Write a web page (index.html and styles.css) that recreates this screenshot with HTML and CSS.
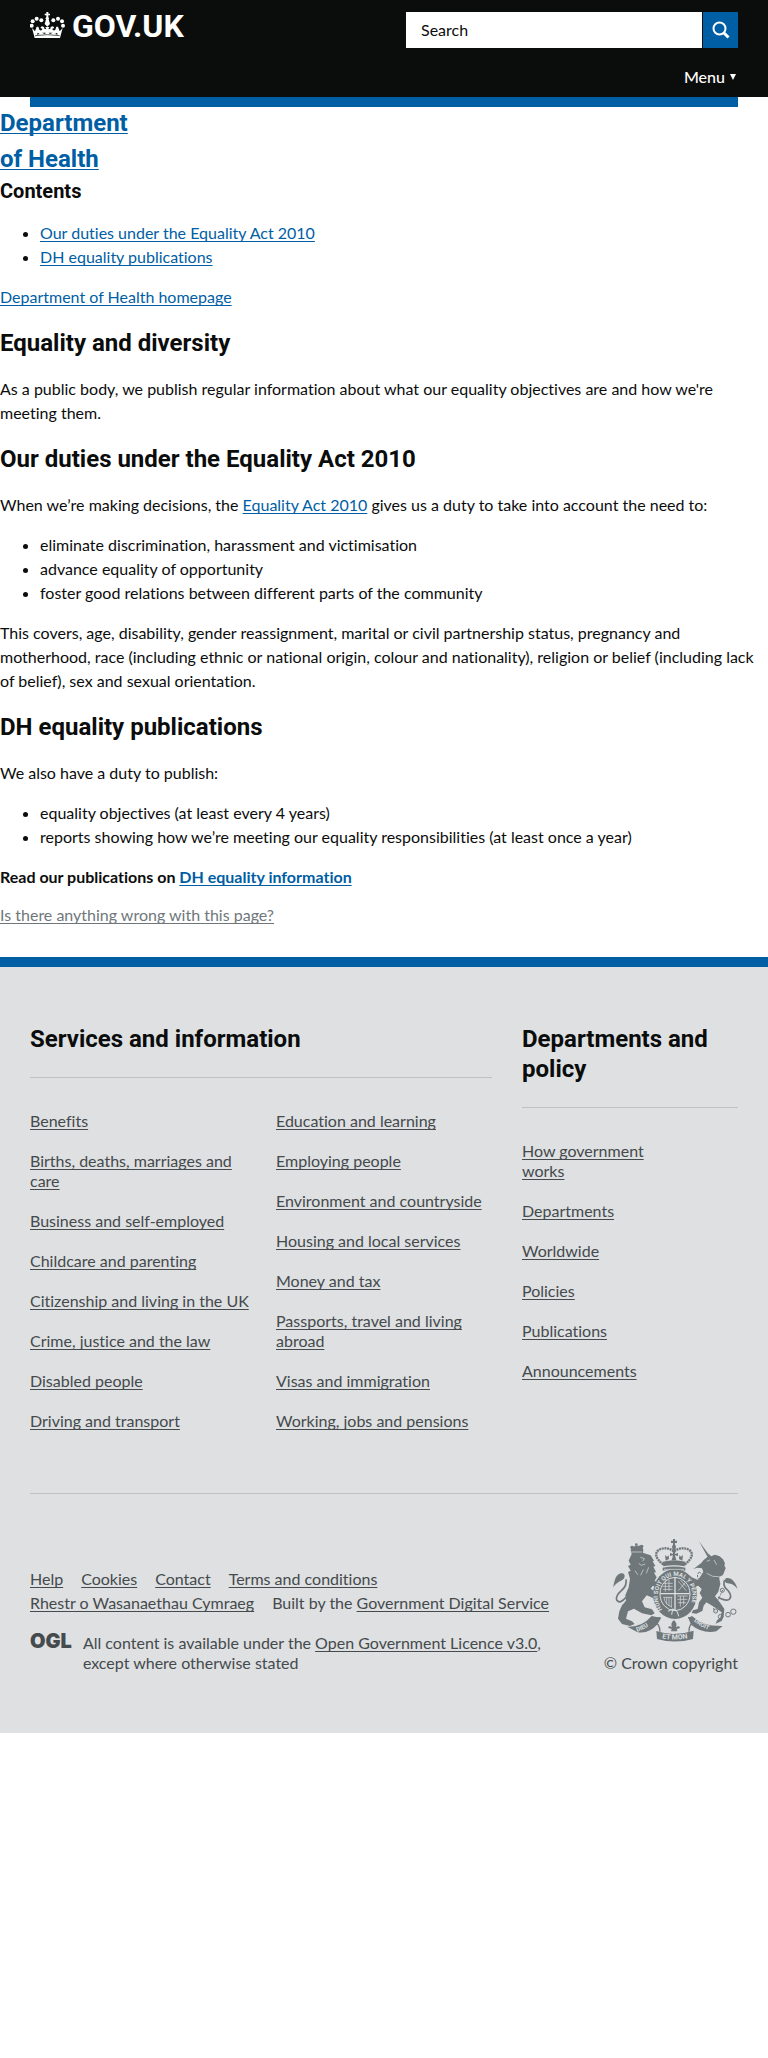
FILE: index.html
```html
<!DOCTYPE html>
<html lang="en">
<head>
<meta charset="utf-8">
<meta name="viewport" content="width=device-width, initial-scale=1">
<title>Equality and diversity - Department of Health - GOV.UK</title>
<link rel="stylesheet" href="styles.css">
</head>
<body>
<header class="site-header">
  <div class="header-inner">
    <a class="logo" href="#" aria-label="GOV.UK home">
      <svg class="logo-crown" viewBox="92 36 105 78" width="35" height="26" aria-hidden="true">
        <g fill="currentColor">
          <path d="M141 36h6v5h5v5h-5v6h-6v-6h-5v-5h5z"/>
          <circle cx="144" cy="55" r="5"/>
          <path d="M140 58h8l4 14-8 8-8-8z"/>
          <circle cx="112" cy="56" r="6"/><circle cx="100" cy="64" r="6"/><circle cx="97" cy="77" r="6"/>
          <circle cx="126" cy="61" r="6"/><circle cx="162" cy="61" r="6"/>
          <circle cx="176" cy="56" r="6"/><circle cx="188" cy="64" r="6"/><circle cx="191" cy="77" r="6"/>
          <path d="M98 84l9 10 5-14h5l3 9c4 4 8 2 9-3l-6-2 4-5c5 0 8 2 8 7l6 2-3-7h12l-3 7 6-2c0-5 3-7 8-7l4 5-6 2c1 5 5 7 9 3l3-9h5l5 14 9-10-8 30H106zM115 98l-2 6 8-2zM128 98l8 4 4-4zM160 98l-8 4-4-4zM173 98l2 6-8-2z" fill-rule="evenodd"/>
        </g>
        <path d="M107 107q37-6 74 0" fill="none" stroke="#0b0c0c" stroke-width="2"/>
      </svg>
      <span class="logo-text">GOV.UK</span>
    </a>
    <div class="header-tools">
      <form class="search" role="search">
        <input class="search-input" type="search" aria-label="Search GOV.UK" placeholder="Search">
        <button class="search-button" type="submit" aria-label="Search">
          <svg viewBox="0 0 18 18" width="18" height="18" aria-hidden="true">
            <circle cx="7.5" cy="7.5" r="6" fill="none" stroke="currentColor" stroke-width="2"/>
            <path d="M12 12l4.500 4.500" stroke="currentColor" stroke-width="3"/>
          </svg>
        </button>
      </form>
      <button class="menu-button" type="button">Menu
        <svg viewBox="0 0 6 6" width="6" height="6" aria-hidden="true"><path d="M0 0h6L3 6z" fill="currentColor"/></svg>
      </button>
    </div>
  </div>
</header>
<div class="header-bar"></div>

<main class="content">
  <div class="organisation"><a href="#">Department<br>of Health</a></div>
  <h2 class="contents-title">Contents</h2>
  <ul>
    <li><a href="#duties">Our duties under the Equality Act 2010</a></li>
    <li><a href="#publications">DH equality publications</a></li>
  </ul>
  <p><a href="#">Department of Health homepage</a></p>
  <h1>Equality and diversity</h1>
  <p>As a public body, we publish regular information about what our equality objectives are and how we're meeting them.</p>
  <h2 id="duties">Our duties under the Equality Act 2010</h2>
  <p>When we’re making decisions, the <a href="#">Equality Act 2010</a> gives us a duty to take into account the need to:</p>
  <ul>
    <li>eliminate discrimination, harassment and victimisation</li>
    <li>advance equality of opportunity</li>
    <li>foster good relations between different parts of the community</li>
  </ul>
  <p>This covers, age, disability, gender reassignment, marital or civil partnership status, pregnancy and motherhood, race (including ethnic or national origin, colour and nationality), religion or belief (including lack of belief), sex and sexual orientation.</p>
  <h2 id="publications">DH equality publications</h2>
  <p>We also have a duty to publish:</p>
  <ul>
    <li>equality objectives (at least every 4 years)</li>
    <li>reports showing how we’re meeting our equality responsibilities (at least once a year)</li>
  </ul>
  <p><strong>Read our publications on <a href="#">DH equality information</a></strong></p>
  <p class="feedback"><a href="#">Is there anything wrong with this page?</a></p>
</main>

<footer class="site-footer">
  <div class="footer-inner">
    <div class="footer-categories">
      <section class="services">
        <h2>Services and information</h2>
        <ul>
          <li><a href="#">Benefits</a></li>
          <li><a href="#">Births, deaths, marriages and care</a></li>
          <li><a href="#">Business and self-employed</a></li>
          <li><a href="#">Childcare and parenting</a></li>
          <li class="one-line"><a href="#">Citizenship and living in the UK</a></li>
          <li><a href="#">Crime, justice and the law</a></li>
          <li><a href="#">Disabled people</a></li>
          <li><a href="#">Driving and transport</a></li>
          <li><a href="#">Education and learning</a></li>
          <li><a href="#">Employing people</a></li>
          <li><a href="#">Environment and countryside</a></li>
          <li><a href="#">Housing and local services</a></li>
          <li><a href="#">Money and tax</a></li>
          <li><a href="#">Passports, travel and living abroad</a></li>
          <li><a href="#">Visas and immigration</a></li>
          <li><a href="#">Working, jobs and pensions</a></li>
        </ul>
      </section>
      <section class="departments">
        <h2>Departments and policy</h2>
        <ul>
          <li><a href="#">How government works</a></li>
          <li><a href="#">Departments</a></li>
          <li><a href="#">Worldwide</a></li>
          <li><a href="#">Policies</a></li>
          <li><a href="#">Publications</a></li>
          <li><a href="#">Announcements</a></li>
        </ul>
      </section>
    </div>
    <div class="footer-meta">
      <div class="meta-text">
        <ul class="meta-links">
          <li><a href="#">Help</a></li>
          <li><a href="#">Cookies</a></li>
          <li><a href="#">Contact</a></li>
          <li><a href="#">Terms and conditions</a></li>
          <li><a href="#">Rhestr o Wasanaethau Cymraeg</a></li>
          <li>Built by the <a href="#">Government Digital Service</a></li>
        </ul>
        <div class="licence">
          <a class="ogl" href="#">OGL</a>
          <p>All content is available under the <a href="#">Open Government Licence v3.0</a>, except where otherwise stated</p>
        </div>
      </div>
      <a class="copyright" href="#">
        <svg class="arms" viewBox="66 54 378 312" width="126" height="104" aria-hidden="true">
          <defs>
            <path id="garter" d="M217 268A52 60 0 1 1 294 268"/>
            <path id="dieu" d="M141 335Q168 328 192 303"/>
            <path id="mon" d="M216 355Q252 363 300 354"/>
            <path id="droit" d="M311 303Q338 328 376 334"/>
          </defs>
          <g fill="currentColor">
            <!-- lion -->
            <path d="M124 104l12-8 22 2 24 8 10 16-4 2 8 14-6 2 8 16-6 2 8 14-6 10 12 8 2 10-20-2-6 8 24 16 6 12-18 2-24-10-14 18 8 18 22 6 8 12-10 6-28-6-24-14-18 8-6 22 18 8 8 8-14 6-24-6-12-16 4-22 8-18 12-14-2-16 10-24 4-26-6-20 8-4-8-14 8-4-6-12z"/>
            <path d="M122 92l2-12 32-4 4 14-2 14-32 2z"/>
            <circle cx="139" cy="74" r="4"/><circle cx="126" cy="82" r="5"/><circle cx="155" cy="79" r="5"/>
            <path d="M70 202c3-22 8-38 22-42 10-1 14 6 11 13-6 12-22 9-33 29z"/>
            <!-- royal crown -->
            <path d="M249 57h6v5h6v7h-6v6h-6v-6h-6v-7h6z"/><circle cx="252" cy="80" r="6"/>
            <path d="M218 125q34-9 68 0l-2 14q-32-7-64 0zM218 143q34-7 68 0v9q-34-7-68 0z"/>
            <path d="M247 84h10l-2 18 9-3v9l-9-2 4 15h-14l4-15-9 2v-9l9 3zM225 105l6 5 5-4 1 11-10 5zM279 105l-6 5-5-4-1 11 10 5z"/>
            <!-- unicorn -->
            <path d="M327 64l32 43-6 4zM333 130l8-10 12-10 4-8 6 7 12-5 14 5 10 9 6 12-2 6 4 9-8 20-12 6 4 20-6 24-10 14 16 20 12 18-2 22-6 14-18 8 4-10 10-8 4-16-22-16-24-14-8 10-4 16-18 8-14-2 4-8 14-4 4-20 10-14-8-14 6-12-10-10-28 8-5-8 22-12-16-6-20 6-4-8 22-9 28 12 8-12 8-12-4-11-14-2-12 4z"/>
            <path d="M442 206c-4-19-18-34-32-32-9 3-6 15 3 16 12 1 18 4 29 16z"/>
            <!-- garter and shield -->
            <ellipse cx="255" cy="222" rx="66" ry="75"/>
            <!-- ribbon -->
            <path d="M112 320q44 2 73-32l28 6-10 18q-28 32-62 24zM306 288q30 31 92 30l-19 16q-42 8-76-20l-8-20zM199 333q52 18 112-1l-2 25q-54 15-108 0z"/>
            <path d="M252 300q12 12 5 22 9-6 13 0-3 6-10 4l2 8h-19l2-8q-9 1-11-4 5-6 13 0-8-11 5-22z"/>
          </g>
          <g fill="none" stroke="currentColor">
            <path d="M108 232q-18 22-28 8-4-12 14-28 18-16 14-34" stroke-width="5"/>
            <path d="M384 232q34 18 38-2 0-12-14-24-10-12-4-26" stroke-width="5"/>
            <path d="M220 134q-34-28-14-44 21-12 46 4M284 134q34-28 14-44-21-12-46 4" stroke-width="7" stroke-dasharray="6 2"/>
            <path d="M212 293q-30 2-20 15 17 1 18 27M294 293q30 2 20 15-17 1-17 27" stroke-width="4"/>
            <path d="M328 156q22 18 60 18M328 156q-10 10-2 22t-12 24M398 210q-12 28-22 42t0 22" stroke-width="3" stroke-dasharray="7 3"/>
            <circle cx="377" cy="273" r="6" stroke-width="3"/><circle cx="392" cy="290" r="7" stroke-width="3"/>
            <circle cx="414" cy="284" r="7" stroke-width="3"/><circle cx="430" cy="275" r="8" stroke-width="3"/>
            <circle cx="397" cy="211" r="6" stroke-width="3"/>
          </g>
          <g fill="none" stroke="#dee0e2" stroke-width="2">
            <ellipse cx="255" cy="222" rx="45" ry="50" stroke-width="3"/>
            <path d="M255 172v99M211 221h88" stroke-width="4"/>
            <path d="M220 190h28M218 199h30M219 208h29M226 181v34M237 179v34M262 228h31M262 238h30M264 248h24M271 228v32M281 228v26M265 184l24 28M271 180l18 20M289 184l-24 28"/>
            <path d="M222 232q2 22 24 29M230 231v22M237 231v27M244 231v31M220 232h27"/>
            <path d="M151 112l12 4-5 8M146 130l8 6 12-4M135 152l8 12M160 148l-8 18M176 142l-7 18M350 124l10-4M372 120l8 14M350 160q18 13 38 10M120 96h36M222 148h60"/>
            <path d="M234 274l14-7 14 8M248 268l-3 16M262 275l4 14" stroke-width="3"/>
          </g>
          <g class="motto">
            <text><textPath href="#garter">HONI SOIT QUI MAL Y PENSE</textPath></text>
            <text><textPath href="#dieu">DIEU</textPath></text>
            <text class="motto-large"><textPath href="#mon">ET MON</textPath></text>
            <text><textPath href="#droit">DROIT</textPath></text>
          </g>
        </svg>
        <span>© Crown copyright</span>
      </a>
    </div>
  </div>
</footer>
</body>
</html>
```
FILE: styles.css
```css
* { box-sizing: border-box; }

body {
  margin: 0;
  background: #fff;
  color: #0b0c0c;
  font-family: Lato, "Liberation Sans", Arial, sans-serif;
  font-size: 16px;
  line-height: 24px;
  font-variant-ligatures: none;
}

a { color: #005ea5; text-underline-offset: 2px; text-decoration-skip-ink: none; text-decoration-thickness: 1px; }
button, input { font: inherit; border: 0; border-radius: 0; }
svg { display: block; }

/* Header */
.site-header { background: #0b0c0c; color: #fff; }
.header-inner {
  display: flex;
  justify-content: space-between;
  max-width: 1020px;
  margin: 0 auto;
  padding: 12px 30px 7px;
}
.logo {
  display: flex;
  align-items: flex-start;
  gap: 7px;
  height: 30px;
  color: #fff;
  text-decoration: none;
}
.logo-text { font-family: Roboto, sans-serif; font-size: 32px; line-height: 28px; font-weight: 700; }
.header-tools { display: flex; flex-direction: column; width: 332px; }
.search { display: flex; gap: 1px; }
.search-input {
  flex: 1;
  min-width: 0;
  height: 36px;
  padding: 0 15px 2px;
  background: #fff;
  color: #0b0c0c;
  appearance: none;
}
.search-input::placeholder { color: #0b0c0c; opacity: 1; }
.search-button {
  display: grid;
  place-items: center;
  width: 35px;
  height: 36px;
  padding: 0;
  background: #005ea5;
  color: #fff;
}
.menu-button {
  display: flex;
  align-items: center;
  align-self: flex-end;
  gap: 5px;
  margin-top: 17px;
  margin-bottom: 1px;
  padding: 0 2px 0 0;
  background: none;
  color: #fff;
  font-weight: 500;
}
.header-bar {
  height: 10px;
  max-width: 960px;
  margin: 0 30px;
  background: #005ea5;
}

/* Content */
.content { padding-bottom: 32px; }
.content p, .content ul { margin: 16px 0; }
.content ul { padding-left: 40px; }
.content h1, .content h2 {
  margin: 16px 0;
  font-family: Roboto, sans-serif;
  font-size: 24px;
  line-height: 36px;
}
.organisation { font: 700 24px/36px Roboto, sans-serif; margin-top: -2px; }
.content .contents-title { margin: 0; font-size: 20px; line-height: 28px; }
.content .feedback { margin-bottom: 0; line-height: 20px; }
.feedback a { color: #6f777b; }

/* Footer */
.site-footer {
  border-top: 10px solid #005ea5;
  background: #dee0e2;
  color: #454a4c;
  line-height: 20px;
}
.site-footer a { color: #454a4c; }
.site-footer ul { margin: 0; padding: 0; list-style: none; }
.footer-inner { max-width: 1020px; margin: 0 auto; padding: 57px 30px 60px; }
.footer-categories {
  display: grid;
  grid-template-columns: minmax(0, 462fr) minmax(0, 216fr);
  gap: 30px;
  padding-bottom: 42px;
  border-bottom: 1px solid #bfc1c3;
}
.footer-categories h2 {
  margin: 0 0 33px;
  padding-bottom: 23px;
  border-bottom: 1px solid #bfc1c3;
  color: #0b0c0c;
  font-family: Roboto, sans-serif;
  font-size: 24px;
  line-height: 30px;
}
.footer-categories li { margin-bottom: 20px; break-inside: avoid; }
.one-line { white-space: nowrap; }
.services ul { columns: 2; column-gap: 30px; }
.departments ul { max-width: 140px; }
.footer-meta {
  display: flex;
  justify-content: space-between;
  align-items: flex-end;
  gap: 30px;
  padding-top: 44px;
}
.meta-text { flex: 1; max-width: 530px; }
.meta-links { display: flex; flex-wrap: wrap; column-gap: 18px; line-height: 24px; }
.licence { display: flex; gap: 11px; margin-top: 18px; }
.licence p { flex: 1; margin: 0; }
.ogl { min-width: 41px; font: 900 20px/16px Inter, sans-serif; }
.site-footer .ogl { text-decoration: none; }
.copyright {
  display: flex;
  flex-direction: column;
  align-items: flex-end;
  gap: 11px;
}
.site-footer .copyright { text-decoration: none; }
.arms { color: #6f777b; }
.motto { fill: #dee0e2; font: 700 18px Roboto, sans-serif; }
.motto-large { font-size: 21px; }
```
